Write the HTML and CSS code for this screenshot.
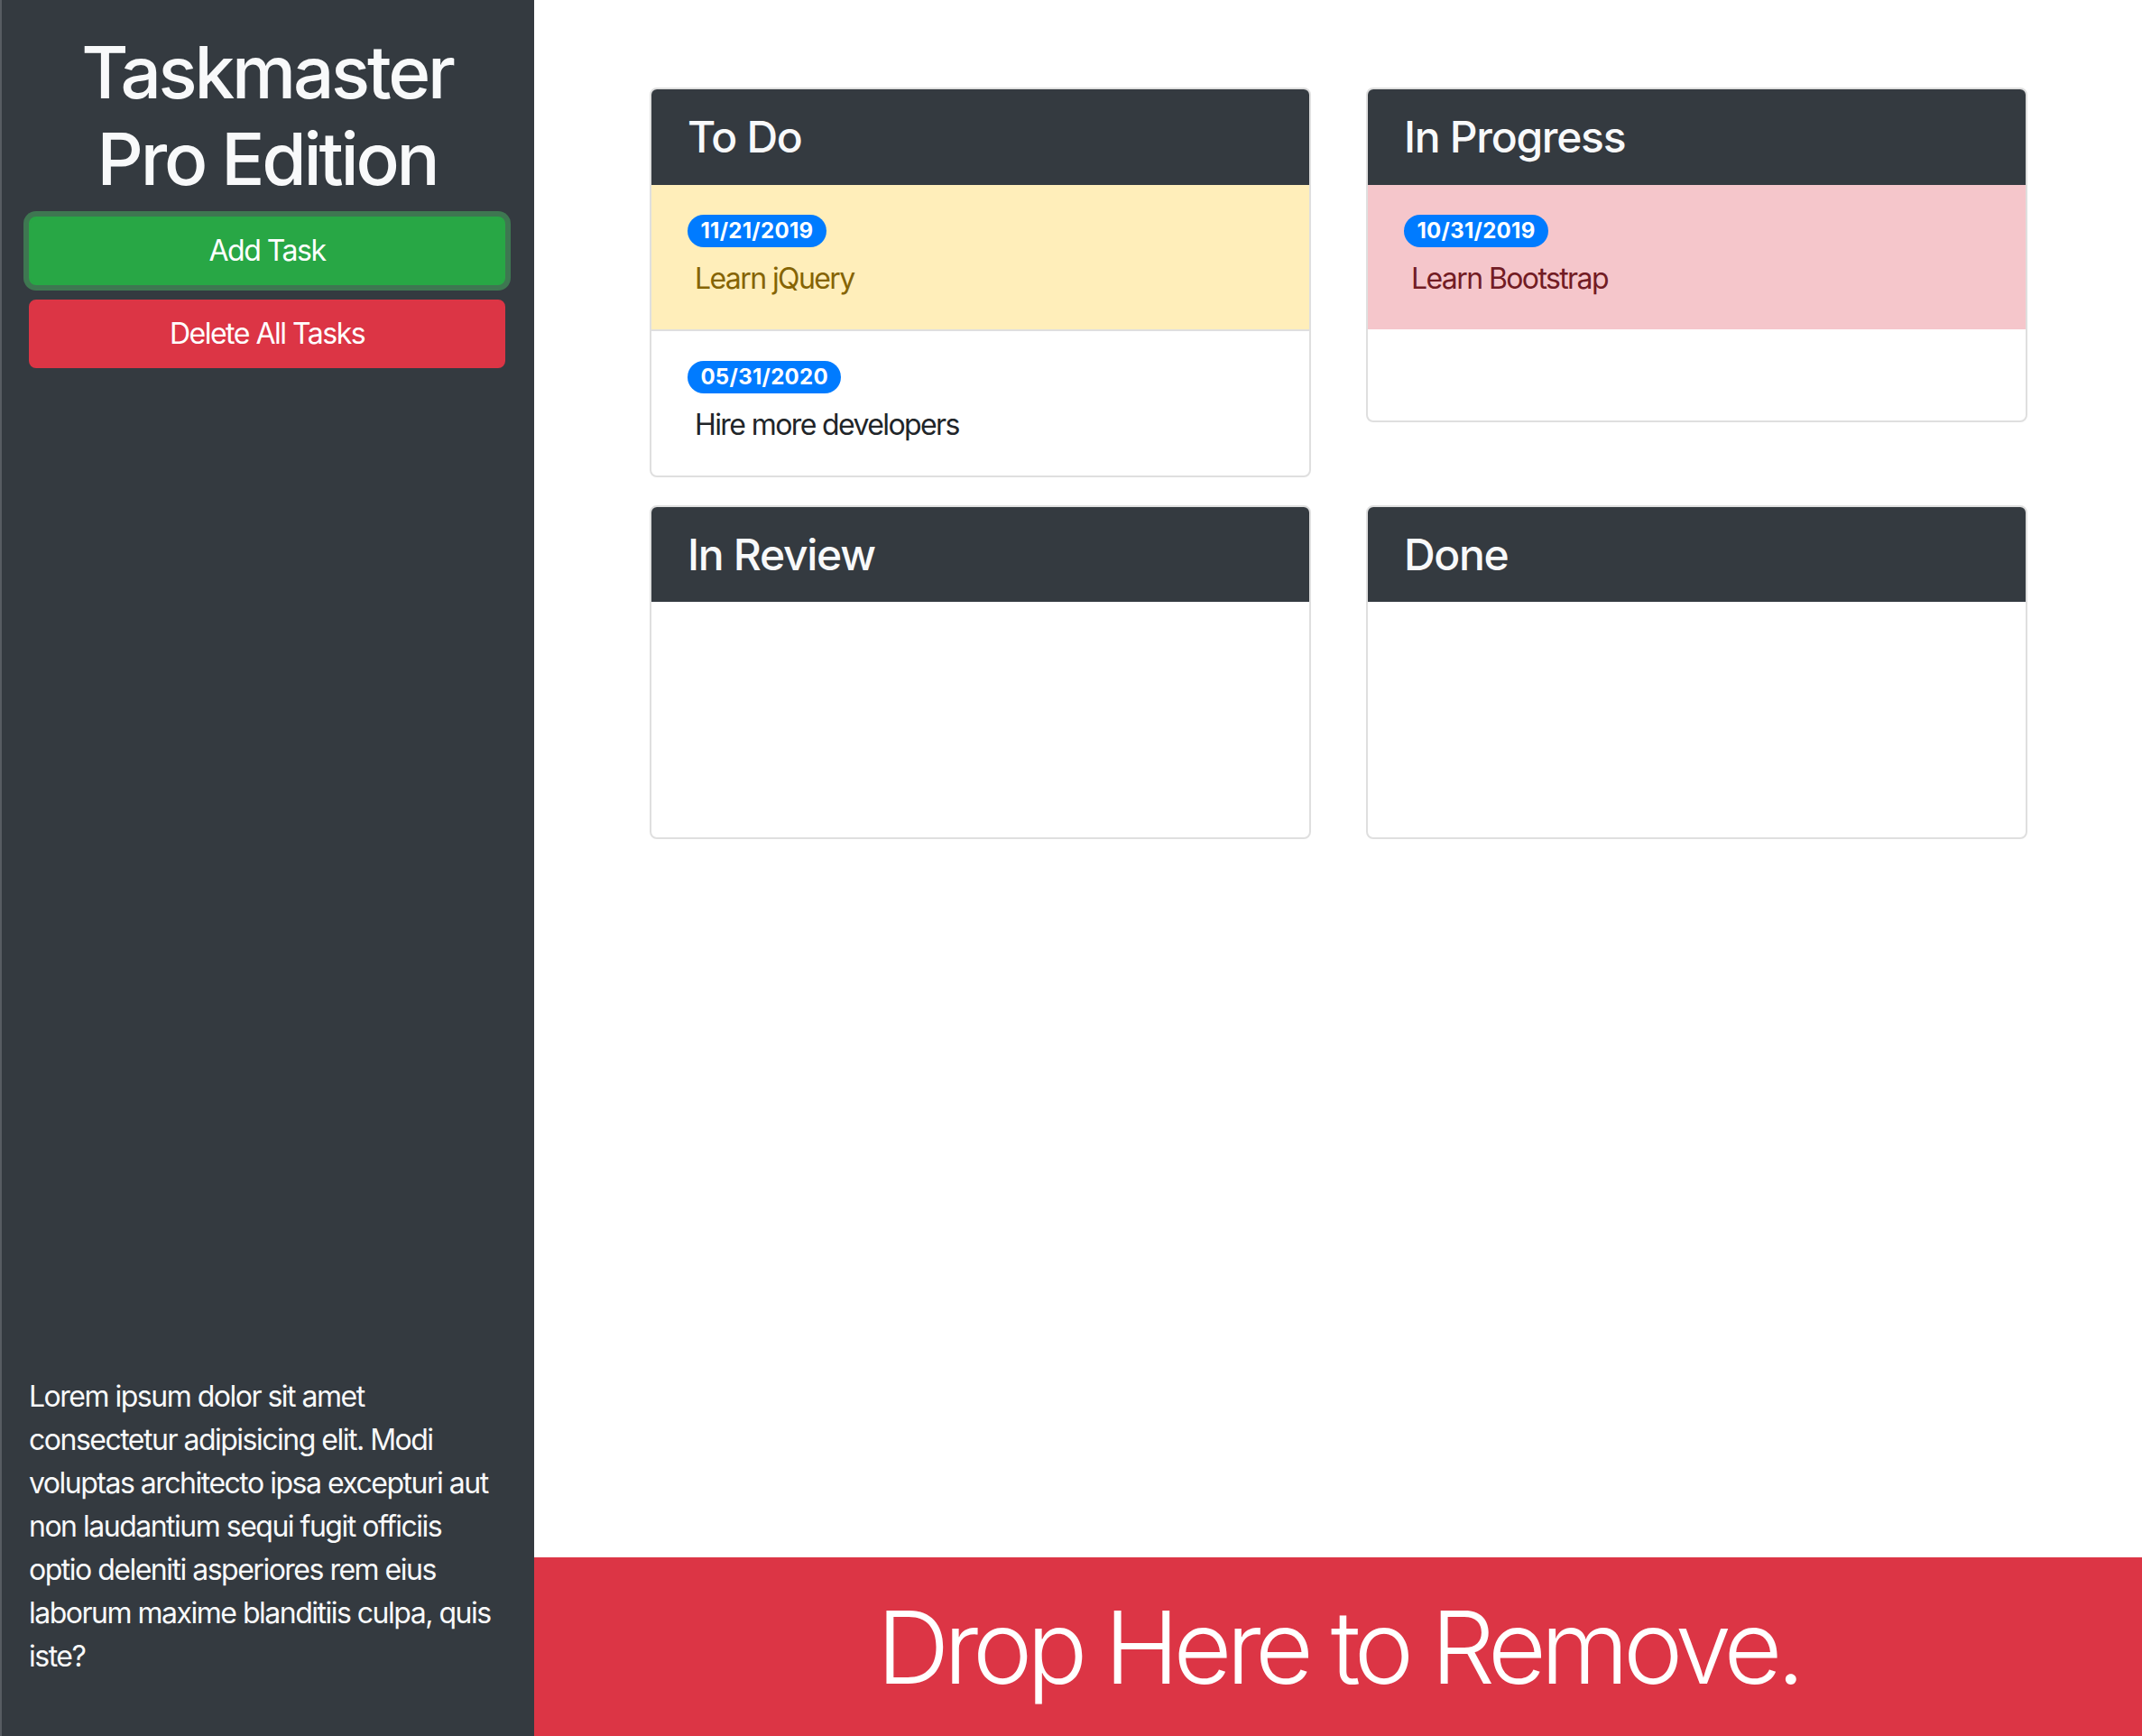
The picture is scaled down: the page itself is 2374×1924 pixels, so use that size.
FILE: index.html
```html
<!DOCTYPE html>
<html lang="en">
<head>
<meta charset="utf-8">
<title>Taskmaster Pro</title>
<link rel="stylesheet" href="styles.css">
</head>
<body>
<div class="app">
  <aside class="sidebar">
    <div class="sidebar-top">
      <h1 class="title">Taskmaster Pro Edition</h1>
      <button class="btn btn-success btn-focus">Add Task</button>
      <button class="btn btn-danger">Delete All Tasks</button>
    </div>
    <p class="about">Lorem ipsum dolor sit amet consectetur adipisicing elit. Modi voluptas architecto ipsa excepturi aut non laudantium sequi fugit officiis optio deleniti asperiores rem eius laborum maxime blanditiis culpa, quis iste?</p>
  </aside>
  <main class="main">
    <div class="board">
      <section class="card">
        <h4 class="card-header">To Do</h4>
        <ul class="list">
          <li class="item item-warning"><span class="badge">11/21/2019</span><p class="item-text">Learn jQuery</p></li>
          <li class="item"><span class="badge">05/31/2020</span><p class="item-text">Hire more developers</p></li>
        </ul>
      </section>
      <section class="card">
        <h4 class="card-header">In Progress</h4>
        <ul class="list">
          <li class="item item-danger"><span class="badge">10/31/2019</span><p class="item-text">Learn Bootstrap</p></li>
        </ul>
      </section>
      <section class="card">
        <h4 class="card-header">In Review</h4>
        <ul class="list"></ul>
      </section>
      <section class="card">
        <h4 class="card-header">Done</h4>
        <ul class="list"></ul>
      </section>
    </div>
    <div class="trash">Drop Here to Remove.</div>
  </main>
</div>
</body>
</html>
```
FILE: styles.css
```css
* { box-sizing: border-box; }
html, body { margin: 0; padding: 0; height: 100%; }
body {
  font-family: Inter, "Noto Sans", "Liberation Sans", sans-serif;
  font-size: 32px;
  line-height: 1.5;
  color: #212529;
  background: #fff;
}
.app {
  display: flex;
  height: 1924px;
}
.sidebar {
  width: 592px;
  flex: 0 0 592px;
  background: #343a40;
  box-shadow: inset 2px 0 0 #575c62;
  color: #f8f9fa;
  padding: 32px;
  display: flex;
  flex-direction: column;
  justify-content: space-between;
}
.sidebar-top {
  display: flex;
  flex-direction: column;
}
.title {
  margin: 0 0 16px;
  font-size: 80px;
  line-height: 96px;
  font-weight: 500;
  text-align: center;
  letter-spacing: -3.2px;
}
.btn {
  display: block;
  width: 100%;
  font-family: inherit;
  font-size: 32px;
  line-height: 48px;
  padding: 12px 24px;
  border: 2px solid transparent;
  border-radius: 8px;
  color: #fff;
  text-align: center;
  letter-spacing: -1.5px;
}
.btn + .btn { margin-top: 16px; }
.btn-success { background: #28a745; border-color: #28a745; }
.btn-danger { background: #dc3545; border-color: #dc3545; }
.btn-focus { box-shadow: 0 0 0 6px rgba(72, 180, 97, 0.5); }
.about {
  margin: 0 0 32px;
  font-size: 32px;
  line-height: 48px;
  letter-spacing: -1.5px;
}
.main {
  flex: 1;
  display: flex;
  flex-direction: column;
  min-width: 0;
}
.board {
  flex: 1;
  display: grid;
  grid-template-columns: 1fr 1fr;
  column-gap: 61px;
  row-gap: 31px;
  align-items: start;
  align-content: start;
  padding: 97px 127px 0 128px;
}
.card {
  border: 2px solid #dfdfdf;
  border-radius: 8px;
  overflow: hidden;
  background: #fff;
}
.card-header {
  margin: 0;
  background: #343a40;
  color: #f8f9fa;
  font-size: 48px;
  line-height: 57.6px;
  font-weight: 500;
  padding: 24px 40px;
  letter-spacing: -1.3px;
}
.list {
  list-style: none;
  margin: 0;
  padding: 0;
  min-height: 261px;
}
.item {
  padding: 24px 40px;
  border-bottom: 2px solid #dfdfdf;
}
.item:last-child { border-bottom: 0; }
.item-warning { background: #ffeeba; color: #856404; }
.item-danger { background: #f5c6cb; color: #721c24; }
.badge {
  display: inline-block;
  background: #007bff;
  color: #fff;
  font-size: 24px;
  font-weight: 700;
  line-height: 1;
  padding: 6px 14.4px;
  border-radius: 20px;
  vertical-align: baseline;
  letter-spacing: 0.3px;
}
.item-text {
  margin: 8px;
  letter-spacing: -1.6px;
}
.trash {
  flex: 0 0 198px;
  background: #dc3545;
  color: #fff;
  font-size: 112px;
  font-weight: 300;
  line-height: 134px;
  display: flex;
  align-items: center;
  justify-content: center;
  letter-spacing: -6.4px;
}
```
